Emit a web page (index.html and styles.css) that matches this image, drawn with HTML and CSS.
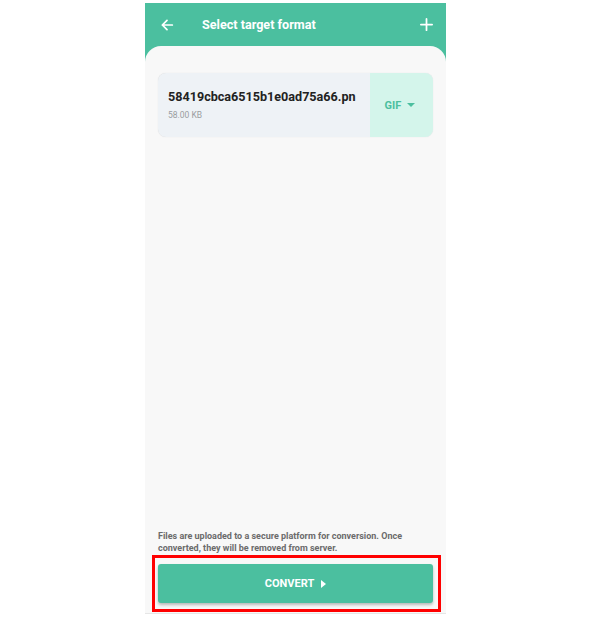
FILE: index.html
```html
<!DOCTYPE html>
<html lang="en">
<head>
    <meta charset="UTF-8">
    <title>Select target format</title>
    <link rel="stylesheet" href="styles.css">
</head>
<body>
<div class="phone">
    <div class="topbar">
        <svg class="icon" width="16" height="16" viewBox="0 0 24 24">
            <path d="M20 12H5M12 5l-7 7 7 7" fill="none" stroke="#fff" stroke-width="2.6" stroke-linecap="round" stroke-linejoin="round"/>
        </svg>
        <span class="title">Select target format</span>
        <svg class="icon plus" width="15" height="15" viewBox="0 0 24 24">
            <path d="M12 3v18M3 12h18" fill="none" stroke="#fff" stroke-width="2.8" stroke-linecap="round"/>
        </svg>
    </div>
    <div class="content">
        <div class="file">
            <div class="file-info">
                <div class="file-name">58419cbca6515b1e0ad75a66.pn</div>
                <div class="file-size">58.00 KB</div>
            </div>
            <div class="format">GIF <span class="caret"></span></div>
        </div>
        <div class="footer">
            <p class="note">Files are uploaded to a secure platform for conversion. Once converted, they will be removed from server.</p>
            <div class="highlight">
                <a class="convert">CONVERT <span class="play"></span></a>
            </div>
        </div>
    </div>
</div>
</body>
</html>
```

FILE: styles.css
```css
* {
    margin: 0;
    padding: 0;
    box-sizing: border-box;
}

body {
    background: #fff;
    font-family: Roboto, "Liberation Sans", sans-serif;
}

.phone {
    width: 301px;
    height: 611px;
    margin: 3px 0 0 145px;
    background: #4bbf9f;
    display: flex;
    flex-direction: column;
}

.topbar {
    height: 43px;
    display: flex;
    align-items: center;
    padding: 0 12px 0 14px;
    color: #fff;
}

.topbar .title {
    font-size: 12.6px;
    font-weight: 700;
    margin-left: 27px;
    flex: 1;
}

.content {
    flex: 1;
    background: #f8f8f8;
    border-radius: 16px 16px 0 0;
    border-bottom: 1px solid #e6e6e6;
    display: flex;
    flex-direction: column;
    justify-content: space-between;
    padding: 27px 13px 1px;
}

.file {
    height: 64px;
    display: flex;
    background: #eef2f6;
    border-radius: 8px;
    box-shadow: 0 0 1px rgba(0, 0, 0, 0.15);
    overflow: hidden;
}

.file-info {
    flex: 1;
    padding: 16px 0 0 10px;
    overflow: hidden;
    white-space: nowrap;
}

.file-name {
    font-size: 12.6px;
    font-weight: 700;
    color: #222;
}

.file-size {
    font-size: 8.5px;
    color: #9a9da0;
    margin-top: 6px;
}

.format {
    width: 63px;
    background: #d4f5eb;
    display: flex;
    align-items: center;
    justify-content: center;
    padding-right: 3px;
    font-size: 11px;
    font-weight: 700;
    color: #4cbf9f;
}

.caret {
    margin-left: 6px;
    border-left: 4px solid transparent;
    border-right: 4px solid transparent;
    border-top: 4px solid #4cbf9f;
}

.note {
    font-size: 9px;
    font-weight: 700;
    line-height: 12px;
    color: #6b6b6b;
    margin-bottom: 1px;
}

.highlight {
    border: 3px solid #f00;
    padding: 6px 5px 6px 3px;
    margin: 0 -8px 0 -6px;
}

.convert {
    height: 39px;
    display: flex;
    align-items: center;
    justify-content: center;
    background: #4bbf9f;
    border-radius: 3px;
    box-shadow: 0 2px 3px rgba(0, 0, 0, 0.25);
    color: #fff;
    font-size: 11px;
    font-weight: 700;
}

.play {
    margin-left: 7px;
    border-top: 4px solid transparent;
    border-bottom: 4px solid transparent;
    border-left: 5px solid #fff;
}
```
